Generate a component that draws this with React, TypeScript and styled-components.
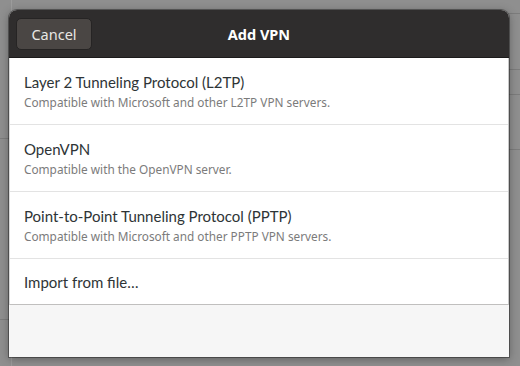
import React from 'react';
import styled, { createGlobalStyle } from 'styled-components';

const GlobalStyle = createGlobalStyle`
  html, body {
    margin: 0;
    padding: 0;
    width: 520px;
    height: 366px;
    overflow: hidden;
    background: #8f8f8f;
    font-family: "Noto Sans", "DejaVu Sans", sans-serif;
  }
`;

const Screen = styled.div`
  position: relative;
  width: 520px;
  height: 366px;
  display: flex;
  background: #8f8f8f;
`;

// dimmed settings window behind the dialog
const Sidebar = styled.div`
  width: 11px;
  border-right: 1px solid #9c9c9c;
  display: flex;
  flex-direction: column;
`;

const Pane = styled.div`
  flex: 1;
  display: flex;
  flex-direction: column;
`;

const BackRow = styled.div<{ $h: number }>`
  height: ${(p) => p.$h}px;
  border-bottom: 1px solid #7c7c7c;
  flex-shrink: 0;
`;

const Dialog = styled.div`
  position: absolute;
  left: 9px;
  top: 10px;
  width: 500px;
  height: 347px;
  display: flex;
  flex-direction: column;
  border-radius: 8px 8px 0 0;
  overflow: hidden;
  background: #f6f6f6;
  box-shadow: 0 0 0 1px rgba(0, 0, 0, 0.35), 0 2px 10px rgba(0, 0, 0, 0.35);
`;

const HeaderBar = styled.div`
  height: 48px;
  flex-shrink: 0;
  background: #2f2d2d;
  display: grid;
  grid-template-columns: 1fr auto 1fr;
  align-items: center;
  padding: 0 7px;
  border-bottom: 1px solid #1c1b1b;
  box-sizing: border-box;
`;

const CancelButton = styled.button`
  justify-self: start;
  width: 76px;
  height: 32px;
  border-radius: 5px;
  border: 1px solid #262424;
  background: #4a4644;
  color: #e8e6e3;
  font-family: inherit;
  font-size: 14.5px;
  padding: 0;
`;

const Title = styled.div`
  color: #ffffff;
  font-weight: 700;
  font-size: 14.5px;
`;

const List = styled.div`
  background: #ffffff;
  border-bottom: 1px solid #c0bfbe;
  border-left: 1px solid #d8d8d8;
  border-right: 1px solid #c8c8c8;
  display: flex;
  flex-direction: column;
`;

const Item = styled.div<{ $h: number; $last?: boolean }>`
  box-sizing: border-box;
  height: ${(p) => p.$h}px;
  padding: 0 14px;
  display: flex;
  flex-direction: column;
  justify-content: center;
  gap: 4px;
  border-bottom: ${(p) => (p.$last ? 'none' : '1px solid #e3e3e3')};
`;

const ItemTitle = styled.div`
  color: #2e3436;
  font-family: Lato, "Noto Sans", sans-serif;
  font-size: 15px;
  line-height: 18px;
`;

const ItemSub = styled.div`
  color: #7b7b7b;
  font-size: 11.8px;
  line-height: 15px;
`;

const Footer = styled.div`
  flex: 1;
  background: #f6f6f6;
`;

const items = [
  {
    title: 'Layer 2 Tunneling Protocol (L2TP)',
    sub: 'Compatible with Microsoft and other L2TP VPN servers.',
  },
  { title: 'OpenVPN', sub: 'Compatible with the OpenVPN server.' },
  {
    title: 'Point-to-Point Tunneling Protocol (PPTP)',
    sub: 'Compatible with Microsoft and other PPTP VPN servers.',
  },
];

export default function App() {
  return (
    <>
      <GlobalStyle />
      <Screen>
        <Sidebar>
          <BackRow $h={138} />
          <BackRow $h={180} />
        </Sidebar>
        <Pane>
          <BackRow $h={13} />
          <BackRow $h={55} />
          <BackRow $h={24} />
          <BackRow $h={54} />
        </Pane>
        <Dialog>
          <HeaderBar>
            <CancelButton>Cancel</CancelButton>
            <Title>Add VPN</Title>
            <span />
          </HeaderBar>
          <List>
            {items.map((it) => (
              <Item key={it.title} $h={67}>
                <ItemTitle>{it.title}</ItemTitle>
                <ItemSub>{it.sub}</ItemSub>
              </Item>
            ))}
            <Item $h={45} $last>
              <ItemTitle>Import from file…</ItemTitle>
            </Item>
          </List>
          <Footer />
        </Dialog>
      </Screen>
    </>
  );
}
